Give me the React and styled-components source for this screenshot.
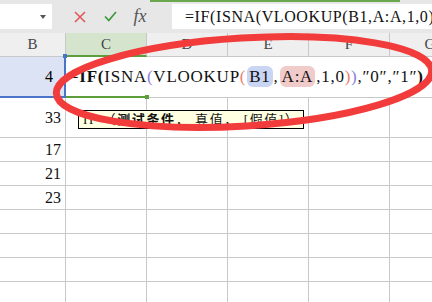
import React from "react";
import styled, { createGlobalStyle } from "styled-components";

const GlobalStyle = createGlobalStyle`
  html, body { margin: 0; padding: 0; background: #fff; overflow: hidden; }
  * { box-sizing: border-box; }
`;

const GRID = "#c8c8c8";
const COLS = "66px 81px 81px 81px 81px 81px 81px";
const SERIF = `"Liberation Serif", "DejaVu Serif", serif`;

const Sheet = styled.div`
  position: relative;
  width: 432px;
  height: 302px;
  overflow: hidden;
  font-family: ${SERIF};
  background: #fff;
`;

const TopStrip = styled.div`
  height: 2px;
  background: linear-gradient(
    to right,
    #e7e7e7 150px,
    #6aa84f 150px,
    #6aa84f 400px,
    #e7e7e7 400px
  );
`;

const Toolbar = styled.div`
  height: 31px;
  background: #e7e7e7;
  display: flex;
  align-items: flex-start;
  padding-top: 2px;
`;

const NameBox = styled.div`
  width: 52px;
  height: 25px;
  background: #fff;
  display: flex;
  align-items: center;
  justify-content: flex-end;
  padding-right: 6px;
`;

const Caret = styled.span`
  width: 0;
  height: 0;
  border-left: 3px solid transparent;
  border-right: 3px solid transparent;
  border-top: 4px solid #555;
`;

const Tools = styled.div`
  display: flex;
  margin-left: 13px;
  margin-right: 17px;
`;

const ToolButton = styled.div`
  width: 30px;
  height: 25px;
  display: flex;
  align-items: center;
  justify-content: center;
  color: #555;
`;

const Fx = styled.span`
  font-family: ${SERIF};
  font-style: italic;
  font-size: 18px;
  color: #555;
`;

const FormulaBox = styled.div`
  flex: 1;
  height: 25px;
  background: #fff;
  padding-left: 13px;
  font-family: ${SERIF};
  font-size: 16px;
  letter-spacing: 0.6px;
  line-height: 25px;
  color: #111;
  white-space: nowrap;
  overflow: hidden;
`;

const HeaderRow = styled.div`
  display: grid;
  grid-template-columns: ${COLS};
  height: 24px;
  background: #efefef;
`;

const ColHead = styled.div`
  display: flex;
  align-items: center;
  justify-content: center;
  font-size: 15px;
  color: #444;
  border-right: 1px solid ${GRID};
  border-bottom: ${({ $active }) => ($active ? "2px solid #5c9e3c" : `1px solid ${GRID}`)};
  background: ${({ $active }) => ($active ? "#d5e5cd" : "transparent")};
`;

const EditRow = styled.div`
  display: grid;
  grid-template-columns: 66px 81px 1fr;
  height: 41px;
`;

const RefCell = styled.div`
  position: relative;
  display: flex;
  align-items: center;
  justify-content: flex-end;
  padding-right: 11px;
  font-size: 16px;
  background: #dce3f4;
  border-right: 2px solid #4a74c9;
  border-bottom: 2px solid #4a74c9;
  &::after {
    content: "";
    position: absolute;
    top: -3px;
    right: -3px;
    width: 4px;
    height: 4px;
    background: #4a74c9;
  }
`;

const ActiveCell = styled.div`
  position: relative;
  display: flex;
  align-items: center;
  padding-left: 3px;
  border-bottom: 2px solid #5c9e3c;
  z-index: 1;
  &::after {
    content: "";
    position: absolute;
    right: -2px;
    bottom: -3px;
    width: 4px;
    height: 4px;
    background: #5c9e3c;
  }
`;

const Formula = styled.div`
  font-family: ${SERIF};
  font-size: 17px;
  letter-spacing: 0.75px;
  color: #111;
  white-space: nowrap;
`;

const Bold = styled.span`
  font-weight: 700;
`;

const Paren = styled.span`
  color: ${({ $color }) => $color};
`;

const Ref = styled.span`
  background: ${({ $bg }) => $bg};
  border-radius: 6px;
  padding: 1px 2px;
  margin: 0 1px;
`;

const FillCell = styled.div`
  border-bottom: 1px solid ${GRID};
`;

const Row = styled.div`
  display: grid;
  grid-template-columns: ${COLS};
  height: ${({ $h }) => $h}px;
`;

const Cell = styled.div`
  position: relative;
  border-right: 1px solid ${GRID};
  border-bottom: 1px solid ${GRID};
`;

const NumCell = styled(Cell)`
  display: flex;
  align-items: center;
  justify-content: flex-end;
  padding-right: 4px;
  font-size: 16px;
  color: #111;
`;

const Tip = styled.div`
  position: absolute;
  left: 12px;
  top: 12px;
  height: 19px;
  padding: 0 4px;
  background: #ffffe1;
  border: 1px solid #000;
  font-family: "Liberation Serif", "Noto Sans CJK SC", serif;
  font-size: 13px;
  line-height: 17px;
  letter-spacing: 1.6px;
  color: #111;
  white-space: nowrap;
  z-index: 2;
`;

const Mark = styled.svg`
  position: absolute;
  left: 0;
  top: 0;
  pointer-events: none;
  z-index: 5;
`;

const lower = ["17", "21", "23", "", "", "", ""];

const BlankCells = () => [0, 1, 2, 3, 4].map((i) => <Cell key={i} />);

const App = () => {
  return (
    <>
      <GlobalStyle />
      <Sheet>
        <TopStrip />
        <Toolbar>
          <NameBox>
            <Caret />
          </NameBox>
          <Tools>
            <ToolButton>
              <svg width="12" height="12" viewBox="0 0 12 12">
                <path d="M1 1L11 11M11 1L1 11" stroke="#e0585a" strokeWidth="1.6" />
              </svg>
            </ToolButton>
            <ToolButton>
              <svg width="13" height="11" viewBox="0 0 13 11">
                <path d="M1 5.5L4.8 9.5L12 1" fill="none" stroke="#3f9a3f" strokeWidth="1.8" />
              </svg>
            </ToolButton>
            <ToolButton>
              <Fx>fx</Fx>
            </ToolButton>
          </Tools>
          <FormulaBox>=IF(ISNA(VLOOKUP(B1,A:A,1,0)),"0","1")</FormulaBox>
        </Toolbar>

        <HeaderRow>
          <ColHead>B</ColHead>
          <ColHead $active>C</ColHead>
          <ColHead>D</ColHead>
          <ColHead>E</ColHead>
          <ColHead>F</ColHead>
          <ColHead>G</ColHead>
        </HeaderRow>

        <EditRow>
          <RefCell>4</RefCell>
          <ActiveCell>
            <Formula>
              =<Bold>IF(</Bold>ISNA<Paren $color="#8a7fd8">(</Paren>VLOOKUP
              <Paren $color="#e7826b">(</Paren>
              <Ref $bg="#c9d5f2">B1</Ref>,<Ref $bg="#f1caca">A:A</Ref>,1,0
              <Paren $color="#e7826b">)</Paren>
              <Paren $color="#8a7fd8">)</Paren>,″0″,″1″<Bold>)</Bold>
            </Formula>
          </ActiveCell>
          <FillCell />
        </EditRow>

        <Row $h={40}>
          <NumCell>33</NumCell>
          <Cell>
            <Tip>
              IF （<Bold>测试条件</Bold>， 真值， [假值]）
            </Tip>
          </Cell>
          <Cell />
          <Cell />
          <Cell />
          <Cell />
        </Row>

        {lower.map((n, i) => (
          <Row key={i} $h={24}>
            <NumCell>{n}</NumCell>
            <BlankCells />
          </Row>
        ))}

        <Mark width="432" height="302" viewBox="0 0 432 302">
          <ellipse
            cx="244"
            cy="82"
            rx="188"
            ry="44"
            transform="rotate(-3.5 244 82)"
            fill="none"
            stroke="#f23b3b"
            strokeWidth="7"
          />
        </Mark>
      </Sheet>
    </>
  );
};

export default App;
